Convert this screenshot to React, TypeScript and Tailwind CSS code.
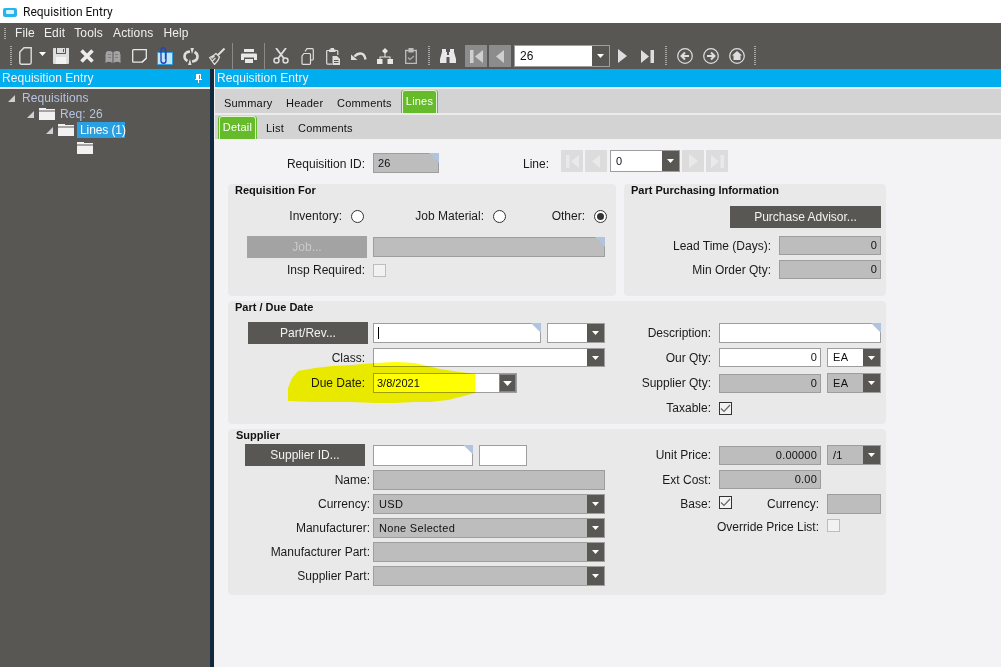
import { ReactNode } from 'react';

const Caret = ({ big }: { big?: boolean }) => (
  <svg width={big ? 9 : 7} height={big ? 5 : 4} viewBox="0 0 7 4">
    <path d="M0 0h7L3.5 4z" fill="#fff" />
  </svg>
);

const Corner = () => (
  <span className="absolute -top-px -right-px w-[10px] h-[10px] bg-[#b0c4de] [clip-path:polygon(0_0,100%_0,100%_100%)]" />
);

const Label = ({ className, children }: { className: string; children: ReactNode }) => (
  <span className={`${className} shrink-0 text-right text-[12px] leading-[14px] text-[#1a1a1a]`}>{children}</span>
);

const Field = ({ className, value, right, off, corner }: { className: string; value?: string; right?: boolean; off?: boolean; corner?: boolean }) => (
  <div
    className={`${className} relative shrink-0 flex items-center border border-[#9e9e9e] text-[11px] tracking-[0.2px] text-[#111] ${
      off ? 'bg-[#bdbdbd]' : 'bg-white'
    } ${right ? 'justify-end pr-[3px]' : 'pl-[4px]'}`}
  >
    {value}
    {corner && <Corner />}
  </div>
);

const Combo = ({ className, value, off }: { className: string; value?: string; off?: boolean }) => (
  <div className={`${className} shrink-0 flex border border-[#9e9e9e] text-[11px] text-[#111] ${off ? 'bg-[#bdbdbd]' : 'bg-white'}`}>
    <span className="flex-1 flex items-center pl-[5px] tracking-[0.3px]">{value}</span>
    <span className="w-[17px] bg-[#595754] flex items-center justify-center">
      <Caret />
    </span>
  </div>
);

const Btn = ({ className, children, off }: { className: string; children: ReactNode; off?: boolean }) => (
  <div
    className={`${className} shrink-0 h-[22px] flex items-center justify-center text-[12px] ${
      off ? 'bg-[#a3a3a3] text-[#c9c9c9]' : 'bg-[#595754] text-[#f2f2f2]'
    }`}
  >
    {children}
  </div>
);

const Radio = ({ on, className }: { on?: boolean; className: string }) => (
  <span className={`${className} shrink-0 w-[13px] h-[13px] rounded-full border border-[#333] bg-white flex items-center justify-center`}>
    {on && <span className="w-[7px] h-[7px] rounded-full bg-[#333]" />}
  </span>
);

const Check = ({ on, className }: { on?: boolean; className: string }) => (
  <span className={`${className} shrink-0 w-[13px] h-[13px] border flex items-center justify-center ${on ? 'border-[#333] bg-[#f3f3f3]' : 'border-[#bdbdbd] bg-[#f2f2f2]'}`}>
    {on && (
      <svg width="11" height="9" viewBox="0 0 11 9">
        <path d="M1 4.5l3 3 6-6.5" fill="none" stroke="#666" strokeWidth="1.2" />
      </svg>
    )}
  </span>
);

const Title = ({ children }: { children: ReactNode }) => (
  <div className="h-[13px] pl-[7px] text-[11px] font-bold leading-[13px] text-[#111]">{children}</div>
);

const Grip = ({ className }: { className: string }) => (
  <span className={`${className} shrink-0 w-[2px] h-[20px] bg-[repeating-linear-gradient(#a8a8a8_0,#a8a8a8_1px,transparent_1px,transparent_2px)]`} />
);

const Sep = ({ className }: { className: string }) => <span className={`${className} shrink-0 w-px h-[26px] bg-[#8a8a8a]`} />;

// toolbar slot, icons sit in 26px cells
const Slot = ({ children }: { children: ReactNode }) => (
  <span className="w-[26px] h-[26px] shrink-0 flex items-center justify-center">{children}</span>
);

const ic = '#dedede';

const IconNew = () => (
  <svg width="13" height="18" viewBox="0 0 13 18" fill="none" stroke={ic} strokeWidth="1.4">
    <path d="M5 .8h7.200v14.700q0 1.700-1.700 1.700h-8Q.8 17.200.8 15.500V5z" />
  </svg>
);
const IconSave = () => (
  <svg width="16" height="16" viewBox="0 0 16 16">
    <path fill={ic} d="M1 0h15v15q0 1-1 1H1q-1 0-1-1V1q0-1 1-1z" />
    <path fill="#595754" d="M3 0h1v5h8V0h1v6H3zM10 1h1v3h-1z" />
    <path fill="#f2f2f2" d="M3 9h10v7H3z" />
  </svg>
);
const IconX = () => (
  <svg width="14" height="14" viewBox="0 0 14 14" stroke="#ececec" strokeWidth="3.6">
    <path d="M1.500 1.500l11 11M12.500 1.500l-11 11" />
  </svg>
);
const IconBook = () => (
  <svg width="16" height="13" viewBox="0 0 16 13">
    <path fill="#a3a3a3" d="M1 2q3-2 6.500 0v11Q4 11 1 12.500zM8.500 2Q12 0 15 2v10.500Q12 11 8.500 13zM0 4h.500v9.500H7v-.500H0zM15.500 4h.500v9.500H9v-.500h6.500z" />
    <path stroke="#7d7d7d" d="M3 4.500h3M3 7.500h3M10 4.500h3M10 7.500h3" />
  </svg>
);
const IconNote = () => (
  <svg width="15" height="14" viewBox="0 0 15 14" fill="none" stroke="#e8e8e8" strokeWidth="1.300">
    <path d="M1.500.7h12.800v8.500l-4 4H1.500q-.8 0-.8-.8V1.500q0-.8.800-.8z" />
    <path d="M14 9.500l-4 3.500" />
  </svg>
);
const IconClip = () => (
  <svg width="16" height="18" viewBox="0 0 16 18">
    <path fill="#bfe6f8" stroke="#2b9fe0" d="M.5 5.500h15v12H.5z" />
    <path fill="none" stroke="#2544b8" strokeWidth="1.400" d="M9 4v9.500q0 2.800-2.500 2.800T4 13.500V3q0-2.200 2.200-2.200T8.500 3v9" />
  </svg>
);
const IconSync = () => (
  <svg width="16" height="17" viewBox="0 0 16 17" fill="none" stroke={ic} strokeWidth="2.600">
    <path d="M7 3.500Q1.500 4 1.500 8.500q0 3 3 4.500M9 13.500q5.500-.5 5.500-5 0-3-3-4.500" />
    <path fill={ic} stroke="none" d="M7.500 0l3.500 0-2 6zM8.500 17l-3.500 0 2-6z" />
  </svg>
);
const IconBroom = () => (
  <svg width="16" height="17" viewBox="0 0 16 17" fill="none" stroke={ic} strokeWidth="1.200">
    <path d="M15.500 .5L9 7" strokeWidth="2" />
    <path d="M7 5.500l3.500 3.500q-1 4-5 7.500L.6 9.500Q4 8.500 7 5.500zM3.500 13l3-3M2.500 10.500l3-2.500" />
  </svg>
);
const IconPrint = () => (
  <svg width="16" height="14" viewBox="0 0 16 14">
    <path fill="#e8e8e8" d="M3 0h10v3H3zM1 4.500h14q1 0 1 1V11h-3V8.500H3V11H0V5.500q0-1 1-1zM4 10h8v4H4z" />
  </svg>
);
const IconCut = () => (
  <svg width="16" height="16" viewBox="0 0 16 16" fill="none" stroke={ic}>
    <circle cx="3.500" cy="12.500" r="2.500" strokeWidth="1.500" />
    <circle cx="12.500" cy="12.500" r="2.500" strokeWidth="1.500" />
    <path d="M5 10.500L13 0M11 10.500L3 0" strokeWidth="1.800" />
  </svg>
);
const IconCopy = () => (
  <svg width="13" height="17" viewBox="0 0 13 17" fill="none" stroke={ic} strokeWidth="1.200">
    <path d="M4 3.500L6 .7h5.300q1 0 1 1V11q0 1-1 1H10" />
    <path d="M3 5.500h5.500q1 0 1 1v8.800q0 1-1 1H2q-1 0-1-1V8z" />
  </svg>
);
const IconPaste = () => (
  <svg width="14" height="17" viewBox="0 0 14 17" fill="none" stroke={ic} strokeWidth="1.200">
    <path d="M3.500 2.500H1.500q-.8 0-.8.800v12q0 .8.800.8H6M9 2.500h2q.8 0 .8.800V7" />
    <path fill={ic} stroke="none" d="M4.500 0h3.500v1.500h1.500V4H3V1.500h1.500z" />
    <path fill={ic} stroke="none" d="M6.500 8H11l3 3v6H6.500z" />
    <path stroke="#595754" d="M8 12.500h4.500M8 14.500h4.500" strokeWidth="1" />
  </svg>
);
const IconUndo = () => (
  <svg width="16" height="11" viewBox="0 0 16 11" fill="none" stroke={ic} strokeWidth="2.400">
    <path d="M3.500 5.500Q6 2.500 9.500 2.500q4 0 5 6" />
    <path fill={ic} stroke="none" d="M0 3.500l6.500 5.500H0z" />
  </svg>
);
const IconTree = () => (
  <svg width="16" height="16" viewBox="0 0 16 16">
    <path fill="#e8e8e8" d="M8 0l3 3-3 3-3-3zM7.500 5h1v3.500h5V11h-1V9.500h-9V11h-1V8.500h5z" />
    <path fill="#e8e8e8" d="M0 11h5.500v5H0zM10.500 11H16v5h-5.500z" />
  </svg>
);
const IconClipCheck = () => (
  <svg width="12" height="16" viewBox="0 0 12 16" fill="none" stroke="#bdbdbd" strokeWidth="1.300">
    <path d="M.7 2.500h10.600v12.800H.7z" />
    <path fill="#bdbdbd" stroke="none" d="M3.500 0h5v4.500h-5z" />
    <path d="M3 9.500l2 2 4-3.500" stroke="#a8a8a8" />
  </svg>
);
const IconBinoc = () => (
  <svg width="16" height="14" viewBox="0 0 16 14">
    <path fill="#e8e8e8" d="M2 0h4v3h1v3h2V3h1V0h4v3l2 7v4H9.500V8h-3v6H0v-4l2-7z" />
  </svg>
);
const IconFirst = ({ c }: { c: string }) => (
  <svg width="13" height="13" viewBox="0 0 13 13">
    <path fill={c} d="M0 0h3.500v13H0zM13 0v13L5 6.500z" />
  </svg>
);
const IconPrev = ({ c }: { c: string }) => (
  <svg width="8" height="13" viewBox="0 0 8 13">
    <path fill={c} d="M8 0v13L0 6.500z" />
  </svg>
);
const IconNext = ({ c }: { c: string }) => (
  <svg width="9" height="14" viewBox="0 0 9 14">
    <path fill={c} d="M0 0v14l9-7z" />
  </svg>
);
const IconLast = ({ c }: { c: string }) => (
  <svg width="13" height="13" viewBox="0 0 13 13">
    <path fill={c} d="M13 0H9.500v13H13zM0 0v13l8-6.500z" />
  </svg>
);
const Circle = ({ children }: { children: ReactNode }) => (
  <svg width="16" height="16" viewBox="0 0 16 16" fill="none" stroke={ic}>
    <circle cx="8" cy="8" r="7.300" strokeWidth="1.200" />
    {children}
  </svg>
);

const Folder = () => (
  <svg width="16" height="12" viewBox="0 0 16 12" className="shrink-0">
    <path fill="#f1f1f1" d="M0 0h7v1h9v1.500H0zM0 3.500h16V12H0z" />
  </svg>
);
const Twist = () => (
  <svg width="7" height="7" viewBox="0 0 7 7" className="shrink-0">
    <path fill="#d0d0d0" d="M7 0v7H0z" />
  </svg>
);

const Tab = ({ className, children }: { className: string; children: ReactNode }) => (
  <span className={`${className} text-[11px] tracking-[0.2px] text-[#111]`}>{children}</span>
);

// active tab: thin green edge, pale inner line along top and sides
const GreenTab = ({ className, children }: { className: string; children: ReactNode }) => (
  <span className={`${className} h-[23px] flex bg-[#66bb2a] px-px rounded-t-[3px]`}>
    <span className="flex-1 flex items-center justify-center border-t border-x border-[#e3f2d6] rounded-t-[3px] text-[11px] tracking-[0.2px] text-white pb-[2px]">
      {children}
    </span>
  </span>
);

export default function App() {
  return (
    <div className="relative w-[1001px] h-[667px] overflow-hidden bg-white font-['Liberation_Sans',Arial,sans-serif]">
      {/* window title */}
      <div className="h-[23px] flex items-center pl-[3px] pt-[1px]">
        <span className="w-[14px] h-[9px] rounded-[2px] bg-[#27b4e8] flex items-center justify-center">
          <span className="w-[8px] h-[4px] bg-[#d9f3fc] rounded-[1px]" />
        </span>
        <span className="ml-[6px] text-[12px] font-['Roboto',sans-serif] text-[#111]">Requisition Entry</span>
      </div>

      {/* menu */}
      <div className="h-[20px] bg-[#595754] flex items-center text-[12px] tracking-[0.15px] text-[#f0f0f0]">
        <Grip className="ml-[4px] !h-[11px]" />
        <span className="ml-[9px]">File</span>
        <span className="ml-[9px]">Edit</span>
        <span className="ml-[9px]">Tools</span>
        <span className="ml-[10px]">Actions</span>
        <span className="ml-[10px]">Help</span>
      </div>

      {/* toolbar */}
      <div className="h-[26px] bg-[#595754] flex items-center">
        <Grip className="ml-[10px]" />
        <span className="ml-[3px] w-[21px] h-[26px] shrink-0 flex items-center justify-center">
          <IconNew />
        </span>
        <span className="w-[12px] h-[26px] shrink-0 flex items-center justify-center pb-[4px]">
          <Caret />
        </span>
        <Slot><IconSave /></Slot>
        <Slot><IconX /></Slot>
        <Slot><IconBook /></Slot>
        <Slot><IconNote /></Slot>
        <Slot><IconClip /></Slot>
        <Slot><IconSync /></Slot>
        <Slot><IconBroom /></Slot>
        <Sep className="ml-[2px]" />
        <span className="ml-[3px]" />
        <Slot><IconPrint /></Slot>
        <Sep className="ml-[2px]" />
        <span className="ml-[3px]" />
        <Slot><IconCut /></Slot>
        <Slot><IconCopy /></Slot>
        <Slot><IconPaste /></Slot>
        <Slot><IconUndo /></Slot>
        <Slot><IconTree /></Slot>
        <Slot><IconClipCheck /></Slot>
        <Grip className="ml-[4px]" />
        <span className="ml-[5px]" />
        <Slot><IconBinoc /></Slot>
        <span className="ml-[4px] w-[22px] h-[22px] bg-[#8c8c8c] flex items-center justify-center"><IconFirst c="#cfcfcf" /></span>
        <span className="ml-[2px] w-[22px] h-[22px] bg-[#8c8c8c] flex items-center justify-center"><IconPrev c="#cfcfcf" /></span>
        <div className="ml-[3px] w-[96px] h-[22px] flex border border-[#9e9e9e] bg-white text-[12px] text-[#111]">
          <span className="flex-1 flex items-center pl-[5px]">26</span>
          <span className="w-[17px] bg-[#595754] flex items-center justify-center"><Caret /></span>
        </div>
        <span className="ml-[8px]"><IconNext c={ic} /></span>
        <span className="ml-[14px]"><IconLast c={ic} /></span>
        <Grip className="ml-[11px]" />
        <span className="ml-[10px]">
          <Circle>
            <path d="M12 8H5" strokeWidth="2" />
            <path d="M8 4.500L4.500 8 8 11.500" strokeWidth="2" />
          </Circle>
        </span>
        <span className="ml-[10px]">
          <Circle>
            <path d="M4 8h7" strokeWidth="2" />
            <path d="M8 4.500L11.500 8 8 11.500" strokeWidth="2" />
          </Circle>
        </span>
        <span className="ml-[10px]">
          <Circle>
            <path fill={ic} stroke="none" d="M8 3l5 4.500h-1.500V12h-7V7.500H3z" />
          </Circle>
        </span>
        <Grip className="ml-[9px]" />
      </div>

      <div className="flex h-[598px]">
        {/* tree panel */}
        <div className="w-[210px] shrink-0 flex flex-col">
          <div className="h-[18px] bg-[#00adef] flex items-center justify-between pl-[2px] pr-[8px] text-[12px] text-[#f2f2f2]">
            <span className="tracking-[0.05px]">Requisition Entry</span>
            <svg width="7" height="9" viewBox="0 0 7 9">
              <path fill="#fff" d="M1 0h5v5h1v1H4v3H3V6H0V5h1z" />
              <path fill="#00adef" d="M4 1h1v4H4z" />
            </svg>
          </div>
          <div className="h-[2px] bg-[#e9e9e9]" />
          <div className="flex-1 bg-[#595754] pt-[1px] text-[12px] tracking-[0.1px]">
            <div className="h-[16px] flex items-center pl-[8px] text-[#b8c3e0]">
              <Twist />
              <span className="ml-[7px]">Requisitions</span>
            </div>
            <div className="h-[16px] flex items-center pl-[27px] text-[#b8c3e0]">
              <Twist />
              <span className="ml-[5px]"><Folder /></span>
              <span className="ml-[5px]">Req: 26</span>
            </div>
            <div className="h-[16px] flex items-center pl-[46px] text-white">
              <Twist />
              <span className="ml-[5px]"><Folder /></span>
              <span className="ml-[3px] h-[16px] w-[48px] bg-[#2b9fe0] flex items-center pl-[3px] whitespace-nowrap tracking-[-0.1px]">Lines (1)</span>
            </div>
            <div className="h-[16px] flex items-center pl-[77px] pt-[3px]">
              <Folder />
            </div>
          </div>
        </div>

        {/* splitter */}
        <div className="w-[4px] shrink-0 bg-[#10293d]" />
        <div className="w-px shrink-0 bg-[#f0f0f0]" />

        {/* main area */}
        <div className="flex-1 flex flex-col bg-[#f3f3f5]">
          <div className="h-[18px] bg-[#00adef] flex items-center pl-[2px] text-[12px] tracking-[0.05px] text-[#f2f2f2]">Requisition Entry</div>
          <div className="h-[2px] bg-[#ececec]" />
          <div className="h-[24px] bg-[#d3d3d3] flex items-center">
            <Tab className="ml-[9px] w-[62px] pt-[4px]">Summary</Tab>
            <Tab className="w-[51px] pt-[4px]">Header</Tab>
            <Tab className="w-[64px] pt-[4px]">Comments</Tab>
            <GreenTab className="w-[37px] mt-[1px]">Lines</GreenTab>
          </div>
          <div className="h-[2px] bg-[#ececec]" />
          <div className="h-[24px] bg-[#d3d3d3] flex items-center">
            <GreenTab className="ml-[3px] w-[39px] mt-[1px]">Detail</GreenTab>
            <Tab className="ml-[9px] w-[32px] pt-[3px]">List</Tab>
            <Tab className="pt-[3px]">Comments</Tab>
          </div>

          <div className="pl-[13px]">
            {/* id row */}
            <div className="flex items-center h-[22px] mt-[11px]">
              <Label className="w-[137px] mt-[6px]">Requisition ID:</Label>
              <Field className="ml-[8px] w-[66px] h-[20px] mt-[4px]" value="26" off corner />
              <Label className="ml-[83px] w-[27px] mt-[6px]">Line:</Label>
              <span className="ml-[12px] w-[22px] h-[22px] bg-[#dcdcdc] flex items-center justify-center"><IconFirst c="#e9e9e9" /></span>
              <span className="ml-[2px] w-[22px] h-[22px] bg-[#dcdcdc] flex items-center justify-center"><IconPrev c="#e9e9e9" /></span>
              <Combo className="ml-[3px] w-[70px] h-[22px]" value="0" />
              <span className="ml-[2px] w-[22px] h-[22px] bg-[#dcdcdc] flex items-center justify-center"><IconNext c="#e9e9e9" /></span>
              <span className="ml-[2px] w-[22px] h-[22px] bg-[#dcdcdc] flex items-center justify-center"><IconLast c="#e9e9e9" /></span>
            </div>

            <div className="flex gap-[8px] mt-[12px] w-[658px]">
              {/* requisition for */}
              <div className="w-[388px] h-[112px] rounded-[4px] bg-[#e9e9e9]">
                <Title>Requisition For</Title>
                <div className="flex items-center h-[14px] mt-[12px]">
                  <Label className="w-[114px]">Inventory:</Label>
                  <Radio className="ml-[9px]" />
                  <Label className="w-[120px]">Job Material:</Label>
                  <Radio className="ml-[9px]" />
                  <Label className="w-[79px]">Other:</Label>
                  <Radio className="ml-[9px]" on />
                </div>
                <div className="flex items-center mt-[13px]">
                  <Btn className="ml-[19px] w-[120px]" off>Job...</Btn>
                  <Field className="ml-[6px] w-[232px] h-[20px]" off corner />
                </div>
                <div className="flex items-center mt-[5px]">
                  <Label className="w-[137px]">Insp Required:</Label>
                  <Check className="ml-[8px]" />
                </div>
              </div>

              {/* purchasing info */}
              <div className="w-[262px] h-[112px] rounded-[4px] bg-[#e9e9e9]">
                <Title>Part Purchasing Information</Title>
                <Btn className="ml-[106px] mt-[9px] w-[151px]">Purchase Advisor...</Btn>
                <div className="flex items-center mt-[8px]">
                  <Label className="w-[147px]">Lead Time (Days):</Label>
                  <Field className="ml-[8px] w-[102px] h-[19px]" value="0" right off />
                </div>
                <div className="flex items-center mt-[5px]">
                  <Label className="w-[147px]">Min Order Qty:</Label>
                  <Field className="ml-[8px] w-[102px] h-[19px]" value="0" right off />
                </div>
              </div>
            </div>

            {/* part / due date */}
            <div className="w-[658px] h-[123px] mt-[5px] rounded-[4px] bg-[#e9e9e9]">
              <Title>Part / Due Date</Title>
              <div className="flex">
                <div className="w-[377px]">
                  <div className="flex items-center mt-[8px]">
                    <Btn className="ml-[20px] w-[120px]">Part/Rev...</Btn>
                    <div className="ml-[5px] w-[168px] h-[20px] relative shrink-0 border border-[#9e9e9e] bg-white flex items-center pl-[4px]">
                      <span className="w-px h-[12px] bg-black" />
                      <Corner />
                    </div>
                    <Combo className="ml-[6px] w-[58px] h-[20px]" />
                  </div>
                  <div className="flex items-center mt-[4px]">
                    <Label className="w-[137px]">Class:</Label>
                    <Combo className="ml-[8px] w-[232px] h-[19px]" />
                  </div>
                  <div className="flex items-center mt-[6px]">
                    <Label className="w-[137px]">Due Date:</Label>
                    <div className="ml-[8px] w-[144px] h-[20px] flex border border-[#9e9e9e] bg-white text-[11px] text-[#111]">
                      <span className="flex-1 flex items-center pl-[3px]">3/8/2021</span>
                      <span className="w-[17px] bg-[#595754] border border-[#888] flex items-center justify-center"><Caret big /></span>
                    </div>
                  </div>
                </div>
                <div>
                  <div className="flex items-center mt-[9px]">
                    <Label className="w-[106px]">Description:</Label>
                    <Field className="ml-[8px] w-[162px] h-[20px]" corner />
                  </div>
                  <div className="flex items-center mt-[5px]">
                    <Label className="w-[106px]">Our Qty:</Label>
                    <Field className="ml-[8px] w-[102px] h-[19px]" value="0" right />
                    <Combo className="ml-[6px] w-[54px] h-[19px]" value="EA" />
                  </div>
                  <div className="flex items-center mt-[6px]">
                    <Label className="w-[106px]">Supplier Qty:</Label>
                    <Field className="ml-[8px] w-[102px] h-[19px]" value="0" right off />
                    <Combo className="ml-[6px] w-[54px] h-[20px]" value="EA" off />
                  </div>
                  <div className="flex items-center mt-[8px]">
                    <Label className="w-[106px]">Taxable:</Label>
                    <Check className="ml-[8px]" on />
                  </div>
                </div>
              </div>
            </div>

            {/* supplier */}
            <div className="w-[658px] h-[166px] mt-[5px] rounded-[4px] bg-[#e9e9e9]">
              <div className="pl-[1px]"><Title>Supplier</Title></div>
              <div className="flex">
                <div className="w-[377px]">
                  <div className="flex items-center mt-[2px]">
                    <Btn className="ml-[17px] w-[120px]">Supplier ID...</Btn>
                    <Field className="ml-[8px] w-[100px] h-[21px]" corner />
                    <Field className="ml-[6px] w-[48px] h-[21px]" />
                  </div>
                  <div className="flex items-center mt-[4px]">
                    <Label className="w-[142px]">Name:</Label>
                    <Field className="ml-[3px] w-[232px] h-[20px]" off />
                  </div>
                  <div className="flex items-center mt-[4px]">
                    <Label className="w-[142px]">Currency:</Label>
                    <Combo className="ml-[3px] w-[232px] h-[20px]" value="USD" off />
                  </div>
                  <div className="flex items-center mt-[4px]">
                    <Label className="w-[142px]">Manufacturer:</Label>
                    <Combo className="ml-[3px] w-[232px] h-[20px]" value="None Selected" off />
                  </div>
                  <div className="flex items-center mt-[4px]">
                    <Label className="w-[142px]">Manufacturer Part:</Label>
                    <Combo className="ml-[3px] w-[232px] h-[20px]" off />
                  </div>
                  <div className="flex items-center mt-[4px]">
                    <Label className="w-[142px]">Supplier Part:</Label>
                    <Combo className="ml-[3px] w-[232px] h-[20px]" off />
                  </div>
                </div>
                <div>
                  <div className="flex items-center mt-[3px]">
                    <Label className="w-[106px]">Unit Price:</Label>
                    <Field className="ml-[8px] w-[102px] h-[19px]" value="0.00000" right off />
                    <Combo className="ml-[6px] w-[54px] h-[20px]" value="/1" off />
                  </div>
                  <div className="flex items-center mt-[5px]">
                    <Label className="w-[106px]">Ext Cost:</Label>
                    <Field className="ml-[8px] w-[102px] h-[19px]" value="0.00" right off />
                  </div>
                  <div className="flex items-center mt-[5px]">
                    <Label className="w-[106px]">Base:</Label>
                    <Check className="ml-[8px] -mt-[3px]" on />
                    <Label className="w-[87px]">Currency:</Label>
                    <Field className="ml-[8px] w-[54px] h-[20px]" off />
                  </div>
                  <div className="flex items-center mt-[6px]">
                    <Label className="w-[214px]">Override Price List:</Label>
                    <Check className="ml-[8px] -mt-[3px]" />
                  </div>
                </div>
              </div>
            </div>
          </div>
        </div>
      </div>

      {/* highlighter scribble over the due date */}
      <svg className="absolute left-0 top-0 mix-blend-multiply pointer-events-none" width="1001" height="667">
        <path
          fill="#ffff00"
          d="M288 401L288 388L292 378L298 371L315 368L332 366L352 365L375 363L395 362L415 363L428 366L440 369L460 372L475 374L475 393L460 397L448 400L430 402L415 402L395 403L375 403L350 402L332 402L310 402Z"
        />
      </svg>
    </div>
  );
}
